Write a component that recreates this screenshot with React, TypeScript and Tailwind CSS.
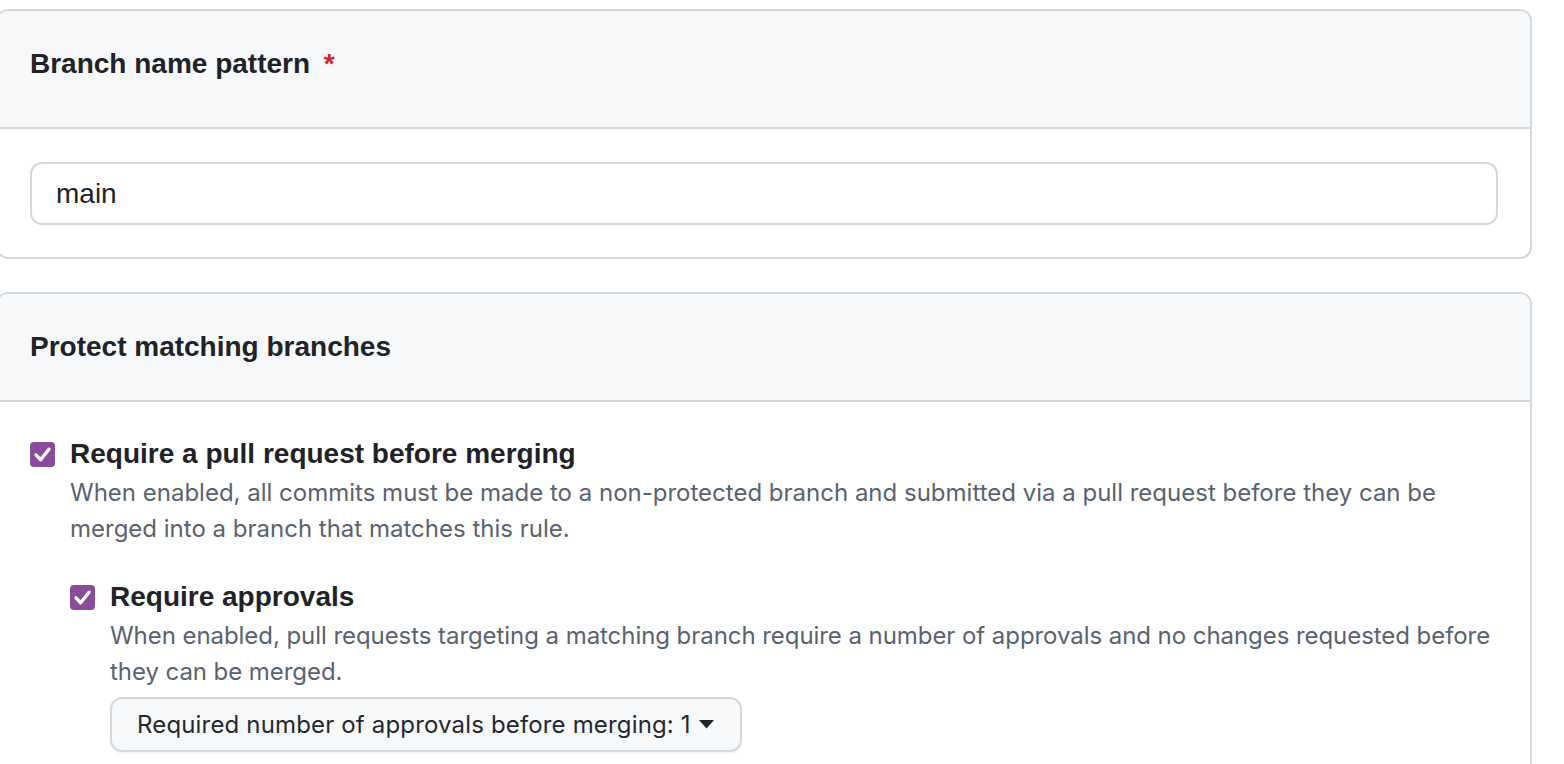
import React from 'react';

const font = { fontFamily: '"Liberation Sans", Arial, sans-serif' };
const body = { fontFamily: 'Inter, "Liberation Sans", Arial, sans-serif' };

const Checkbox = () => (
  <span className="flex h-[25px] w-[25px] shrink-0 items-center justify-center rounded-[4px] bg-[#8b4b9c]">
    <svg width="25" height="25" viewBox="0 0 25 25" fill="none">
      <path d="M6 12.8l4.6 5L19 7.2" stroke="#fff" strokeWidth="3.4" strokeLinecap="round" strokeLinejoin="round" />
    </svg>
  </span>
);

const Option = ({ title, children }: { title: string; children: React.ReactNode }) => (
  <div>
    <label className="flex items-center gap-[15px] text-[28px] font-bold leading-[42px] text-[#1f2328]">
      <Checkbox />
      <span>{title}</span>
    </label>
    <div className="pl-[40px]">{children}</div>
  </div>
);

export default function App() {
  return (
    <div className="min-h-screen bg-white pt-[9px]" style={font}>
      <div className="-ml-[4px] mr-[32px] flex flex-col gap-[33px]">
        {/* Branch name pattern */}
        <section className="overflow-hidden rounded-[12px] border-2 border-[#d1d9e0] bg-white">
          <div className="border-b-2 border-[#d1d9e0] bg-[#f6f8fa] px-[32px] pt-[32px] pb-[42px]">
            <h3 className="text-[28px] font-bold leading-[42px] text-[#1f2328]">
              Branch name pattern <span className="ml-[6px] text-[#d1242f]">*</span>
            </h3>
          </div>
          <div className="px-[32px] pt-[33px] pb-[32px]">
            <div className="flex h-[63px] items-center rounded-[12px] border-2 border-[#d1d9e0] px-[24px] text-[28px] text-[#1f2328]">
              main
            </div>
          </div>
        </section>

        {/* Protect matching branches */}
        <section className="overflow-hidden rounded-t-[12px] border-2 border-b-0 border-[#d1d9e0] bg-white">
          <div className="border-b-2 border-[#d1d9e0] bg-[#f6f8fa] px-[32px] py-[32px]">
            <h3 className="text-[28px] font-bold leading-[42px] text-[#1f2328]">Protect matching branches</h3>
          </div>
          <div className="px-[32px] pt-[31px] pb-[40px]">
            <Option title="Require a pull request before merging">
              <p className="whitespace-nowrap text-[24px] leading-[36px] text-[#59636e]" style={body}>
                When enabled, all commits must be made to a non-protected branch and submitted via a pull request before they can be
                <br />
                merged into a branch that matches this rule.
              </p>
              <div className="mt-[29px]">
                <Option title="Require approvals">
                  <p className="whitespace-nowrap text-[24px] leading-[36px] tracking-[-0.06px] text-[#59636e]" style={body}>
                    When enabled, pull requests targeting a matching branch require a number of approvals and no changes requested before
                    <br />
                    they can be merged.
                  </p>
                  <button
                    className="mt-[7px] flex h-[55px] items-center gap-[8px] rounded-[12px] border-2 border-[#d1d9e0] bg-[#f6f8fa] pl-[25px] pr-[26px] text-[24px] tracking-[0.16px] text-[#25292e] shadow-[0_2px_0_rgba(31,35,40,0.04)]"
                    style={body}
                  >
                    <span>Required number of approvals before merging: 1</span>
                    <svg width="15" height="9" viewBox="0 0 15 9">
                      <path d="M0 0h15L7.5 8.5z" fill="#1f2328" />
                    </svg>
                  </button>
                </Option>
              </div>
            </Option>
          </div>
        </section>
      </div>
    </div>
  );
}
